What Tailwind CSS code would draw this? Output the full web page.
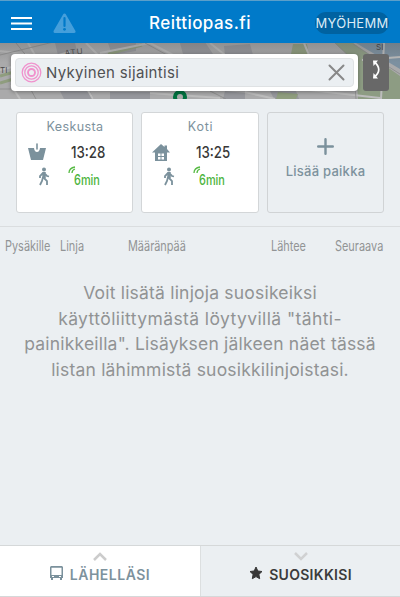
<!DOCTYPE html>
<html lang="fi">
<head>
<meta charset="utf-8">
<title>Reittiopas.fi</title>
<script src="https://cdn.jsdelivr.net/npm/@tailwindcss/browser@4"></script>
</head>
<body class="w-[400px] h-[597px] overflow-hidden bg-[#ebeff2] font-['Inter','Liberation_Sans',sans-serif] flex flex-col">
<header class="h-[43px] shrink-0 bg-[#007ac9] border-t border-[#5a9fca] flex items-center text-white relative">
  <svg class="ml-[11px] mt-[2px] shrink-0" width="21" height="15" stroke="#fff" stroke-width="2"><path d="M0 2h21M0 7.500h21M0 13h21"/></svg>
  <svg class="ml-[21px] mt-[2px] shrink-0" width="23" height="21" viewBox="0 0 23 21"><path d="M11.500 2 21 18.500H2Z" fill="#459fdb" stroke="#459fdb" stroke-width="3" stroke-linejoin="round"/><path d="M11.500 5v8" stroke="#007ac9" stroke-width="2.200" stroke-linecap="round"/><circle cx="11.500" cy="16.300" r="1.400" fill="#007ac9"/></svg>
  <h1 class="ml-[73px] mt-[3px] w-[103px] whitespace-nowrap text-[17px] font-medium tracking-[0.45px]">Reittiopas.fi</h1>
  <div class="ml-[63px] mt-[2px] w-[74px] h-[22px] rounded-full bg-[#0062a1] text-[13px] leading-[22px] text-[#dcecf7] whitespace-nowrap flex justify-center tracking-[0.3px]">MYÖHEMM</div>
</header>
<section class="h-[56px] shrink-0 relative flex items-start pt-[11px] pl-[11px] gap-[5px] overflow-hidden bg-[#aaa]">
  <svg class="absolute inset-0" width="400" height="56">
    <defs><linearGradient id="s" x1="0" y1="0" x2="0" y2="1"><stop offset="0" stop-color="#555" stop-opacity=".3"/><stop offset=".35" stop-color="#555" stop-opacity="0"/></linearGradient></defs>
    <rect width="400" height="56" fill="#aaaaab"/>
    <g fill="#96979c"><path d="M55 0h20l3 12H58zM108 0h28v8l-24 4zM180 0l25-1 8 12h-30zM224 3l26-2 3 11h-28zM60 48h30l4 8H64zM110 49h40v7h-40zM225 48l20 2v6h-22zM270 48h26l3 8h-25z"/></g>
    <path d="M335 0h18l47 33v23h-42l-2-36z" fill="#8d9c83"/><path d="M356 0h44v26z" fill="#7c90a0"/>
    <path d="M0 33l38-11M0 40l30-9M108 11l34-9" stroke="#8f9d7e" stroke-width="3" fill="none"/><path d="M293 1h14l2 10h-18zM278 49l20 2-2 5h-20z" fill="#8f9d7e"/>
    <g stroke="#bcbcbc" fill="none" stroke-width="2"><path d="M0 8l75 9M28 0l8 14M86 0l12 12M100 10l50-10 25 13M210 0l15 12M304 0l5 12M0 27l70-18M20 56l-9-14M93 56l-7-12M150 50l70 5M245 49l30 7M310 47l70 8M362 17l38-3M384 0l-3 56"/></g>
    <g stroke="#8a8a8a" fill="none" stroke-width=".8"><path d="M0 12l66-16M16 0l12 15M145 0l22 12M0 46h30M36 56l-5-9M210 48l16 8M335 0l18 17 3 39M353 1l47 30"/></g>
    <text transform="translate(65 13) rotate(-7)" font-size="8" fill="#4b4b4b" letter-spacing="1">ATU</text>
    <text x="0" y="30" font-size="8" fill="#4b4b4b">TI</text>
    <text x="376" y="7" font-size="8" fill="#3d3d3d">SI</text>
    <circle cx="180" cy="54" r="5" fill="#aaa" stroke="#00713f" stroke-width="4"/>
    <rect width="400" height="56" fill="url(#s)"/>
  </svg>
  <div class="relative w-[347px] h-[37px] bg-white rounded-[4px] p-[4px] shadow-[0_1px_4px_rgba(0,0,0,.35)]">
    <div class="h-[29px] bg-[#ebeff2] rounded-[4px] border border-[#dfe2e4] flex items-center pl-[5px] pr-[8px]">
      <svg width="21" height="21" viewBox="0 0 21 21" fill="none" stroke="#f092cd"><circle cx="10.500" cy="10.500" r="3.500" stroke-width="1.900"/><circle cx="10.500" cy="10.500" r="6.700" stroke-width="1.300"/><circle cx="10.500" cy="10.500" r="9.300" stroke-width="1.300"/></svg>
      <span class="ml-[4px] mt-[2px] text-[15px] text-[#505153] tracking-[0.32px] whitespace-nowrap">Nykyinen sijaintisi</span>
      <svg class="ml-auto" width="17" height="17" stroke="#888" stroke-width="2" stroke-linecap="round"><path d="M1.500 1.500l14 14M15.500 1.500l-14 14"/></svg>
    </div>
  </div>
  <div class="relative w-[26px] h-[37px] bg-[#686868] rounded-[3px]">
    <svg class="ml-[9px] mt-[5px]" width="10" height="21" fill="none" stroke="#fff" stroke-width="1.700"><path d="M2.500 3q8.500 7.500 0 15"/><path d="M1 1.500h5L1.500 7zM1 19.500h5L1.500 14z" fill="#fff" stroke="none"/></svg>
  </div>
</section>
<section class="h-[128px] shrink-0 pt-[13px] pl-[16px] flex gap-[8px] border-b border-[#dadddf]">
  <div class="w-[117px] h-[101px] bg-white border border-[#d3d6d8] rounded-[3px] text-[#7d929d]">
    <h2 class="h-[27px] text-center text-[12.500px] leading-[27px] tracking-[0.4px] pl-[1px]">Keskusta</h2>
    <div class="h-[24px] flex items-center pl-[11px]">
      <svg width="18" height="19" fill="#7b919c"><path d="M0 5h6q.5 4 3 4t3-4h6l-3 12H3z"/><path d="M9 1v5" stroke="#7b919c" stroke-width="1.600" stroke-linecap="round"/></svg>
      <span class="ml-[25px] w-[36px] text-[#383838]"><span class="inline-block origin-left scale-x-[0.83] text-[16px] font-medium">13:28</span></span>
    </div>
    <div class="h-[25px] flex items-center pl-[21px]">
      <svg width="12" height="19" viewBox="0 0 12 19" fill="none" stroke="#7b919c" stroke-width="1.800"><circle cx="6" cy="2.500" r="2" fill="#7b919c" stroke="none"/><path d="M6 5v6" stroke-width="3.500"/><path d="M5 6L2 9v2M7 7l2 2 2 .5M5 10l-1 4-2 4M6 11l3 3v4"/></svg>
      <svg class="ml-[18px] mb-[13px]" width="8" height="8" fill="none" stroke="#56ba43" stroke-width="1.300"><path d="M1 7q0-5 6-6M4 7q0-3 3-4"/></svg>
      <span class="-ml-[2px] mt-[4px] w-[30px] text-[#4cb43c]"><span class="inline-block origin-left scale-x-[0.78] text-[14px] font-medium">6min</span></span>
    </div>
  </div>
  <div class="w-[118px] h-[101px] bg-white border border-[#d3d6d8] rounded-[3px] text-[#7d929d]">
    <h2 class="h-[27px] text-center text-[12.500px] leading-[27px] tracking-[0.7px] pl-[1px]">Koti</h2>
    <div class="h-[24px] flex items-center pl-[10px]">
      <svg width="18" height="19" fill="#7b919c"><path d="M9 1l3.500 3V2.500H15V6l3 3.500h-3V18H3V9.500H0z"/><path d="M6 10.500h2.500V13H6zm3.500 0H12V13H9.500zM6 14h2.500v2.500H6zm3.500 0H12v2.500H9.500z" fill="#fff"/></svg>
      <span class="ml-[26px] w-[36px] text-[#383838]"><span class="inline-block origin-left scale-x-[0.83] text-[16px] font-medium">13:25</span></span>
    </div>
    <div class="h-[25px] flex items-center pl-[21px]">
      <svg width="12" height="19" viewBox="0 0 12 19" fill="none" stroke="#7b919c" stroke-width="1.800"><circle cx="6" cy="2.500" r="2" fill="#7b919c" stroke="none"/><path d="M6 5v6" stroke-width="3.500"/><path d="M5 6L2 9v2M7 7l2 2 2 .5M5 10l-1 4-2 4M6 11l3 3v4"/></svg>
      <svg class="ml-[18px] mb-[13px]" width="8" height="8" fill="none" stroke="#56ba43" stroke-width="1.300"><path d="M1 7q0-5 6-6M4 7q0-3 3-4"/></svg>
      <span class="-ml-[2px] mt-[4px] w-[30px] text-[#4cb43c]"><span class="inline-block origin-left scale-x-[0.78] text-[14px] font-medium">6min</span></span>
    </div>
  </div>
  <div class="w-[117px] h-[101px] border border-[#d0d3d5] rounded-[3px] text-[#7d929d] flex flex-col items-center pt-[25px]">
    <svg width="17" height="17" stroke="#7b919c" stroke-width="2.400" stroke-linecap="round"><path d="M8.500 1.200v14.600M1.200 8.500h14.600"/></svg>
    <span class="mt-[7px] text-[13px] leading-[18px] tracking-[0.25px] font-medium whitespace-nowrap">Lisää paikka</span>
  </div>
</section>
<div class="h-[36px] shrink-0 flex items-center pl-[5px] text-[14px] text-[#929495] whitespace-nowrap">
  <div class="w-[55px]"><span class="inline-block origin-left scale-x-[0.78]">Pysäkille</span></div>
  <div class="w-[68px]"><span class="inline-block origin-left scale-x-[0.78]">Linja</span></div>
  <div class="w-[143px]"><span class="inline-block origin-left scale-x-[0.78]">Määränpää</span></div>
  <div class="w-[64px]"><span class="inline-block origin-left scale-x-[0.78]">Lähtee</span></div>
  <div><span class="inline-block origin-left scale-x-[0.78]">Seuraava</span></div>
</div>
<main class="flex-1 pt-[17px] text-center text-[17.500px] leading-[25.700px] tracking-[0.2px] text-[#919394] whitespace-nowrap">
  <p>Voit lisätä linjoja suosikeiksi</p>
  <p class="tracking-[0.4px]">käyttöliittymästä löytyvillä "tähti-</p>
  <p>painikkeilla". Lisäyksen jälkeen näet tässä</p>
  <p>listan lähimmistä suosikkilinjoistasi.</p>
</main>
<nav class="h-[52px] shrink-0 flex border-t border-b border-[#d5d8d9] text-[14px] font-semibold whitespace-nowrap">
  <div class="w-[200px] bg-white flex flex-col items-center text-[#7d929d]">
    <svg class="mt-[6px]" width="14" height="9" fill="none" stroke="#ccc" stroke-width="2.500"><path d="M1 8l6-6 6 6"/></svg>
    <div class="flex items-center h-[27px]">
      <svg class="mb-[2px]" width="13" height="15" fill="#7b919c"><path fill-rule="evenodd" d="M1 0h11l1 1V12h-1v2h-2v-2H3v2H1v-2H0V1zM1.500 1.700v7.300h10V1.700zM2 10v1h2v-1zm7 0v1h2v-1z"/></svg>
      <span class="ml-[7px] tracking-[0.5px]">LÄHELLÄSI</span>
    </div>
  </div>
  <div class="w-[200px] border-l border-[#dcdfe0] flex flex-col items-center text-[#3b3b3b]">
    <svg class="mt-[6px]" width="14" height="9" fill="none" stroke="#d0d1d2" stroke-width="2.500"><path d="M1 1l6 6 6-6"/></svg>
    <div class="flex items-center h-[27px]">
      <svg class="mb-[3px]" width="14" height="14" viewBox="0 0 14 14" fill="#383838" stroke="#383838" stroke-linejoin="round"><path d="M7 1l1.800 4 4.200.5-3.100 2.900.8 4.300L7 10.600l-3.700 2.100.8-4.300L1 5.500 5.200 5z"/></svg>
      <span class="ml-[6px] tracking-[0.3px]">SUOSIKKISI</span>
    </div>
  </div>
</nav>
</body>
</html>
